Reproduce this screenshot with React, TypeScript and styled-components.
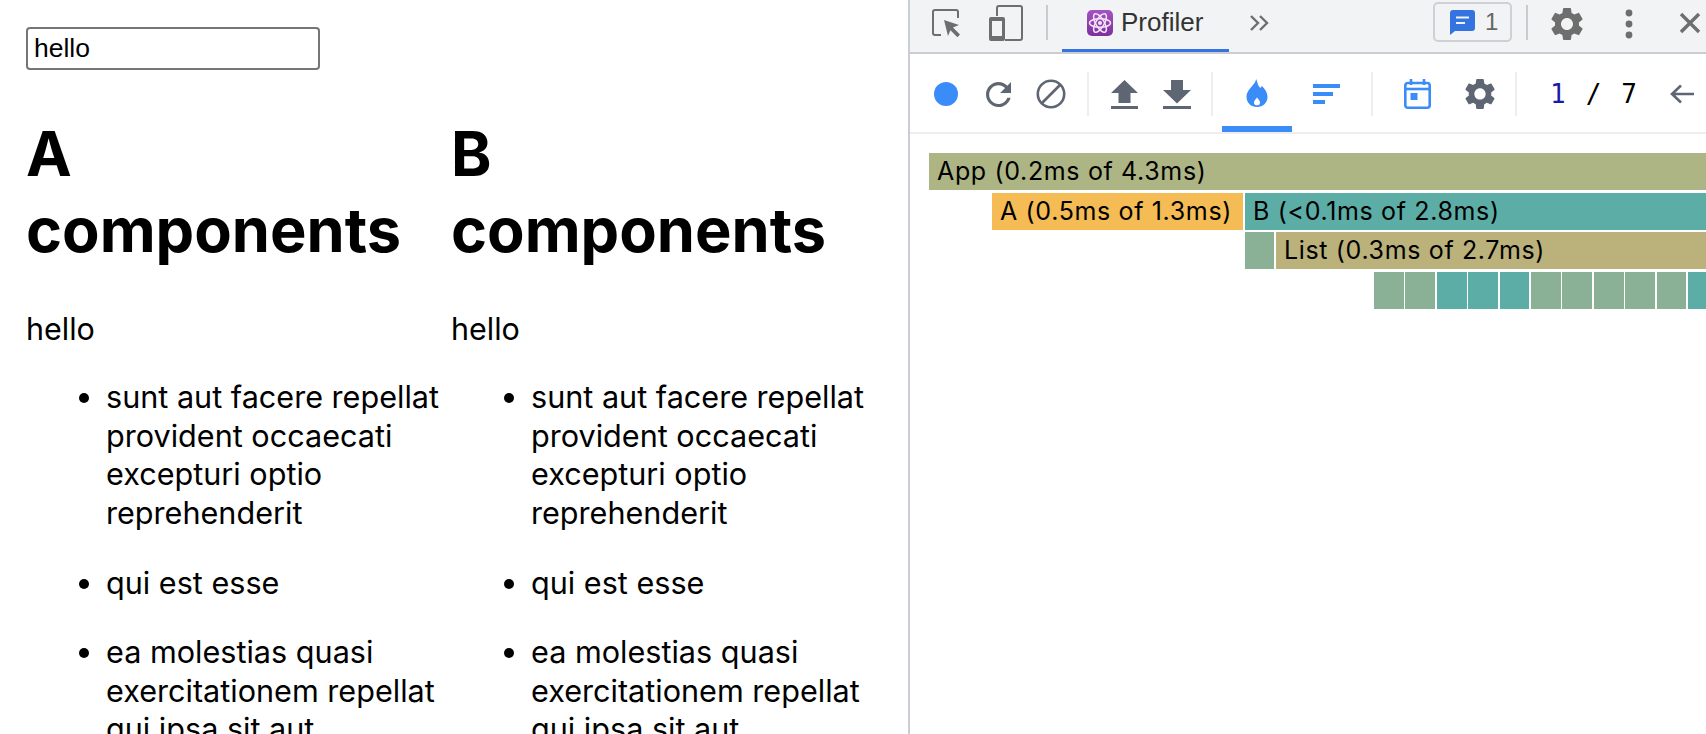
import React from 'react'
import styled, { createGlobalStyle } from 'styled-components'

const GlobalStyle = createGlobalStyle`
	html, body {
		margin: 0;
		padding: 0;
		background: #fff;
		overflow: hidden;
	}
	* {
		box-sizing: border-box;
	}
`

const Screen = styled.div`
	width: 1706px;
	height: 734px;
	display: flex;
	overflow: hidden;
	font-family: Inter, 'Liberation Sans', sans-serif;
	color: #000;
`

const Page = styled.div`
	width: 908px;
	flex: none;
	padding: 27px 0 0 26px;
	overflow: hidden;
`

const SearchInput = styled.input`
	display: block;
	width: 294px;
	height: 43px;
	padding: 0 6px;
	border: 2px solid #767676;
	border-radius: 4px;
	font-family: 'Liberation Sans', sans-serif;
	font-size: 26.5px;
	color: #000;
	background: #fff;
`

const Columns = styled.div`
	display: flex;
	margin-top: 46px;
`

const Column = styled.div`
	width: 425px;
	flex: none;
`

const Heading = styled.h1`
	margin: 0;
	font-size: 61.3px;
	line-height: 76px;
	font-weight: 700;
`

const Greeting = styled.p`
	margin: 42px 0 0;
	font-size: 30.5px;
	line-height: 38.4px;
`

const List = styled.ul`
	margin: 30px 0 0;
	padding: 0 0 0 80px;
`

const ListItem = styled.li`
	font-size: 30.6px;
	line-height: 38.4px;
	margin-bottom: 31.5px;
`

const DevTools = styled.div`
	flex: 1;
	min-width: 0;
	display: flex;
	flex-direction: column;
	border-left: 2px solid #cacdd1;
`

const TabBar = styled.div`
	height: 54px;
	flex: none;
	display: flex;
	align-items: flex-start;
	padding-left: 22px;
	background: #f1f3f4;
	border-bottom: 2px solid #cbcdd1;
`

const TabIcon = styled.div<{ $width: number; $left?: number; $top?: number }>`
	width: ${(p) => p.$width}px;
	margin-left: ${(p) => p.$left || 0}px;
	margin-top: ${(p) => p.$top || 0}px;
	flex: none;
	display: flex;
	color: #6e6e6e;
	svg {
		display: block;
		width: 100%;
		height: auto;
	}
`

const TabDivider = styled.div<{ $left: number }>`
	width: 2px;
	height: 35px;
	margin: 5px 0 0 ${(p) => p.$left}px;
	flex: none;
	background: #c9cbce;
`

const ProfilerTab = styled.div`
	width: 167px;
	height: 52px;
	margin-left: 14px;
	flex: none;
	display: flex;
	align-items: center;
	gap: 8px;
	padding: 0 0 4px 25px;
	border-bottom: 3px solid #3374e0;
	font-family: 'Liberation Sans', sans-serif;
	font-size: 26px;
	color: #333;
`

const AtomBadge = styled.div`
	width: 26px;
	height: 26px;
	flex: none;
	border-radius: 5px;
	background: linear-gradient(#a653c2, #7d2f9e);
	svg {
		display: block;
	}
`

const Spacer = styled.div`
	flex: 1;
`

const TabBarEnd = styled.div`
	width: 5px;
	flex: none;
`

const IssuesButton = styled.div`
	width: 79px;
	height: 40px;
	margin-top: 2px;
	flex: none;
	display: flex;
	align-items: center;
	gap: 10px;
	padding-left: 15px;
	border: 2px solid #ced0d4;
	border-radius: 5px;
	font-family: 'Liberation Sans', sans-serif;
	font-size: 24px;
	color: #666;
	svg {
		display: block;
		width: 25px;
		height: 25px;
		flex: none;
	}
`

const Toolbar = styled.div`
	height: 80px;
	flex: none;
	display: flex;
	align-items: center;
	padding: 2px 0 0 24px;
	border-bottom: 2px solid #eeeeee;
`

const ToolIcon = styled.div<{ $width: number; $left?: number; $active?: boolean }>`
	width: ${(p) => p.$width}px;
	margin-left: ${(p) => p.$left || 0}px;
	flex: none;
	color: ${(p) => (p.$active ? '#3a8cf8' : '#5f6673')};
	svg {
		display: block;
		width: 100%;
		height: auto;
	}
`

const RecordDot = styled.div`
	width: 24px;
	height: 24px;
	flex: none;
	border-radius: 50%;
	background: #3a8cf8;
`

const ToolDivider = styled.div<{ $left: number }>`
	width: 2px;
	height: 44px;
	margin-left: ${(p) => p.$left}px;
	flex: none;
	background: #eeeeee;
`

const FlameTab = styled.div`
	width: 70px;
	height: 78px;
	margin: 0 0 2px 9px;
	flex: none;
	display: flex;
	align-items: center;
	justify-content: center;
	color: #3a8cf8;
	border-bottom: 6px solid #3a8cf8;
	svg {
		display: block;
		width: 22px;
		height: 28px;
		margin-top: 6px;
	}
`

const Counter = styled.div`
	width: 87px;
	margin-left: 33px;
	flex: none;
	display: flex;
	justify-content: space-between;
	font-family: 'DejaVu Sans Mono', 'Liberation Mono', monospace;
	font-size: 26px;
	color: #000;
`

const CurrentCommit = styled.span`
	color: #1a1aa6;
`

const Chart = styled.div`
	flex: 1;
	padding: 19px 0 0 19px;
	overflow: hidden;
`

const ChartRow = styled.div<{ $offset: number }>`
	height: 37px;
	margin: 0 0 2.5px ${(p) => p.$offset}px;
	display: flex;
	gap: 2px;
`

const Bar = styled.div<{ $color: string; $width?: number }>`
	${(p) => (p.$width ? `width: ${p.$width}px; flex: none;` : 'flex: 1;')}
	min-width: 0;
	padding-left: 8px;
	background: ${(p) => p.$color};
	font-size: 25px;
	line-height: 37px;
	letter-spacing: 0.65px;
	white-space: nowrap;
	overflow: hidden;
`

const LeafRow = styled.div`
	height: 37px;
	margin-left: 445px;
	display: flex;
	gap: 1.6px;
`

const Leaf = styled.div<{ $color: string }>`
	width: 29.8px;
	flex: none;
	background: ${(p) => p.$color};
`

const GEAR =
	'M19.14 12.94c.04-.3.06-.61.06-.94 0-.32-.02-.64-.07-.94l2.03-1.58c.18-.14.23-.41.12-.61l-1.92-3.32c-.12-.22-.37-.29-.59-.22l-2.39.96c-.5-.38-1.03-.7-1.62-.94l-.36-2.54c-.04-.24-.24-.41-.48-.41h-3.84c-.24 0-.43.17-.47.41l-.36 2.54c-.59.24-1.13.57-1.62.94l-2.39-.96c-.22-.08-.47 0-.59.22L2.74 8.87c-.12.21-.08.47.12.61l2.03 1.58c-.05.3-.09.63-.09.94s.02.64.07.94l-2.03 1.58c-.18.14-.23.41-.12.61l1.92 3.32c.12.22.37.29.59.22l2.39-.96c.5.38 1.03.7 1.62.94l.36 2.54c.05.24.24.41.48.41h3.84c.24 0 .44-.17.47-.41l.36-2.54c.59-.24 1.13-.56 1.62-.94l2.39.96c.22.08.47 0 .59-.22l1.92-3.32c.12-.22.07-.47-.12-.61l-2.01-1.58zM12 15.6c-1.98 0-3.6-1.62-3.6-3.6s1.62-3.6 3.6-3.6 3.6 1.62 3.6 3.6-1.62 3.6-3.6 3.6z'

const Gear = () => (
	<svg viewBox="2.4 1.8 19.2 20.4" fill="currentColor">
		<path d={GEAR} />
	</svg>
)

const items = [
	'sunt aut facere repellat provident occaecati excepturi optio reprehenderit',
	'qui est esse',
	'ea molestias quasi exercitationem repellat qui ipsa sit aut',
]

const leafColors = [
	'#8ab096',
	'#8ab096',
	'#5cada6',
	'#5cada6',
	'#5cada6',
	'#8ab096',
	'#8ab096',
	'#8ab096',
	'#8ab096',
	'#8ab096',
	'#5cada6',
]

const ComponentColumn = ({ name }: { name: string }) => (
	<Column>
		<Heading>
			{name}
			<br />
			components
		</Heading>
		<Greeting>hello</Greeting>
		<List>
			{items.map((item) => (
				<ListItem key={item}>{item}</ListItem>
			))}
		</List>
	</Column>
)

const App = () => {
	return (
		<Screen>
			<GlobalStyle />
			<Page>
				<SearchInput defaultValue="hello" />
				<Columns>
					<ComponentColumn name="A" />
					<ComponentColumn name="B" />
				</Columns>
			</Page>
			<DevTools>
				<TabBar>
					<TabIcon $width={29} $top={9}>
						<svg viewBox="0 0 29 29" fill="none">
							<path
								d="M9 26H3a2 2 0 0 1-2-2V3a2 2 0 0 1 2-2h21a2 2 0 0 1 2 2v6"
								stroke="currentColor"
								strokeWidth="2"
							/>
							<path
								d="M12 11l15 5-6 2.6 7 7-2.6 2.6-7-7L16 27z"
								fill="currentColor"
							/>
						</svg>
					</TabIcon>
					<TabIcon $width={34} $left={28} $top={5}>
						<svg viewBox="0 0 34 36" fill="none">
							<path
								d="M8 11V3a2 2 0 0 1 2-2h21a2 2 0 0 1 2 2v30a2 2 0 0 1-2 2H16"
								stroke="currentColor"
								strokeWidth="2"
							/>
							<path
								fillRule="evenodd"
								d="M2 12h12a2 2 0 0 1 2 2v20a2 2 0 0 1-2 2H2a2 2 0 0 1-2-2V14a2 2 0 0 1 2-2zm1 4v15h10V16z"
								fill="currentColor"
							/>
						</svg>
					</TabIcon>
					<TabDivider $left={23} />
					<ProfilerTab>
						<AtomBadge>
							<svg viewBox="0 0 26 26" width="26" height="26" fill="none">
								<g stroke="#f3e6f7" strokeWidth="1.5">
									<ellipse cx="13" cy="13" rx="10.5" ry="4.2" />
									<ellipse
										cx="13"
										cy="13"
										rx="10.5"
										ry="4.2"
										transform="rotate(60 13 13)"
									/>
									<ellipse
										cx="13"
										cy="13"
										rx="10.5"
										ry="4.2"
										transform="rotate(120 13 13)"
									/>
								</g>
								<circle cx="13" cy="13" r="2" fill="#f3e6f7" />
							</svg>
						</AtomBadge>
						Profiler
					</ProfilerTab>
					<TabIcon $width={20} $left={20} $top={14}>
						<svg viewBox="0 0 20 18" fill="none">
							<path
								d="M2 2l7 7-7 7M11 2l7 7-7 7"
								stroke="currentColor"
								strokeWidth="2.4"
							/>
						</svg>
					</TabIcon>
					<Spacer />
					<IssuesButton>
						<svg viewBox="0 0 25 25">
							<path
								d="M3 0h19a3 3 0 0 1 3 3v15a3 3 0 0 1-3 3H5l-5 4V3a3 3 0 0 1 3-3z"
								fill="#3374e0"
							/>
							<path d="M6 6.5h13v2H6zM6 12h9v2H6z" fill="#f1f3f4" />
						</svg>
						1
					</IssuesButton>
					<TabDivider $left={14} />
					<TabIcon $width={32} $left={23} $top={7}>
						<Gear />
					</TabIcon>
					<TabIcon $width={8} $left={42} $top={9}>
						<svg viewBox="0 0 8 30" fill="currentColor">
							<circle cx="4" cy="4" r="3.4" />
							<circle cx="4" cy="15" r="3.4" />
							<circle cx="4" cy="26" r="3.4" />
						</svg>
					</TabIcon>
					<TabIcon $width={22} $left={46} $top={12}>
						<svg viewBox="0 0 22 22" fill="none">
							<path
								d="M2 2l18 18M20 2L2 20"
								stroke="currentColor"
								strokeWidth="3.4"
							/>
						</svg>
					</TabIcon>
					<TabBarEnd />
				</TabBar>
				<Toolbar>
					<RecordDot />
					<ToolIcon $width={25} $left={28}>
						<svg viewBox="4 4 16 16" fill="currentColor">
							<path d="M17.65 6.35C16.2 4.9 14.21 4 12 4c-4.42 0-7.99 3.58-7.99 8s3.57 8 7.99 8c3.73 0 6.84-2.55 7.73-6h-2.08c-.82 2.33-3.04 4-5.65 4-3.31 0-6-2.69-6-6s2.69-6 6-6c1.66 0 3.14.69 4.22 1.78L13 11h7V4l-2.35 2.35z" />
						</svg>
					</ToolIcon>
					<ToolIcon $width={30} $left={25}>
						<svg viewBox="0 0 30 30" fill="none">
							<circle cx="15" cy="15" r="13.2" stroke="currentColor" strokeWidth="2.6" />
							<path d="M6 24L24 6" stroke="currentColor" strokeWidth="2.6" />
						</svg>
					</ToolIcon>
					<ToolDivider $left={21} />
					<ToolIcon $width={27} $left={22}>
						<svg viewBox="0 0 27 29" fill="currentColor">
							<path d="M13.5 0L27 13h-7.5v10h-12V13H0zM0 26h27v3H0z" />
						</svg>
					</ToolIcon>
					<ToolIcon $width={28} $left={25}>
						<svg viewBox="0 0 28 29" fill="currentColor">
							<path d="M8 0h12v10h8L14 23.5 0 10h8zM0 26h28v3H0z" />
						</svg>
					</ToolIcon>
					<ToolDivider $left={20} />
					<FlameTab>
						<svg viewBox="0 0 24 32">
							<path
								fill="currentColor"
								fillRule="evenodd"
								d="M11 0c2 4 1.500 7 4 9.500 1 1 1.800.5 2.300-1.500C21 11 24 15.500 24 20.500 24 27 18.500 32 12 32S0 27 0 20.500C0 15 3 12 5.500 9 8 6 10.500 4 11 0zm1 21c-2 2.300-3.500 4-3.500 6 0 1.900 1.600 3 3.500 3s3.500-1.100 3.500-3c0-2-1.500-3.700-3.500-6z"
							/>
						</svg>
					</FlameTab>
					<ToolIcon $width={27} $left={21} $active>
						<svg viewBox="0 0 27 21" fill="currentColor">
							<path d="M0 0h27v4H0zM0 8h20v4H0zM0 16h12v4H0z" />
						</svg>
					</ToolIcon>
					<ToolDivider $left={31} />
					<ToolIcon $width={27} $left={31} $active>
						<svg viewBox="0 0 27 30" fill="none">
							<rect x="1.300" y="4" width="24.400" height="24.700" rx="2.500" stroke="currentColor" strokeWidth="2.600" />
							<path d="M1 10h25" stroke="currentColor" strokeWidth="2.600" />
							<path d="M7 0v6M20 0v6" stroke="currentColor" strokeWidth="2.600" />
							<rect x="6.500" y="14" width="7" height="7" fill="currentColor" />
						</svg>
					</ToolIcon>
					<ToolIcon $width={30} $left={34}>
						<Gear />
					</ToolIcon>
					<ToolDivider $left={20} />
					<Counter>
						<CurrentCommit>1</CurrentCommit>
						<span>/</span>
						<span>7</span>
					</Counter>
					<ToolIcon $width={24} $left={33}>
						<svg viewBox="0 0 24 20" fill="none">
							<path
								d="M24 10H3M11 1.500L2 10l9 8.500"
								stroke="currentColor"
								strokeWidth="2.600"
							/>
						</svg>
					</ToolIcon>
				</Toolbar>
				<Chart>
					<ChartRow $offset={0}>
						<Bar $color="#aeb584">App (0.2ms of 4.3ms)</Bar>
					</ChartRow>
					<ChartRow $offset={63}>
						<Bar $color="#f5bb55" $width={251}>
							A (0.5ms of 1.3ms)
						</Bar>
						<Bar $color="#5cada6">B (&lt;0.1ms of 2.8ms)</Bar>
					</ChartRow>
					<ChartRow $offset={316}>
						<Bar $color="#8ab096" $width={29} />
						<Bar $color="#bab27a">List (0.3ms of 2.7ms)</Bar>
					</ChartRow>
					<LeafRow>
						{leafColors.map((color, i) => (
							<Leaf $color={color} key={i} />
						))}
					</LeafRow>
				</Chart>
			</DevTools>
		</Screen>
	)
}

export default App
